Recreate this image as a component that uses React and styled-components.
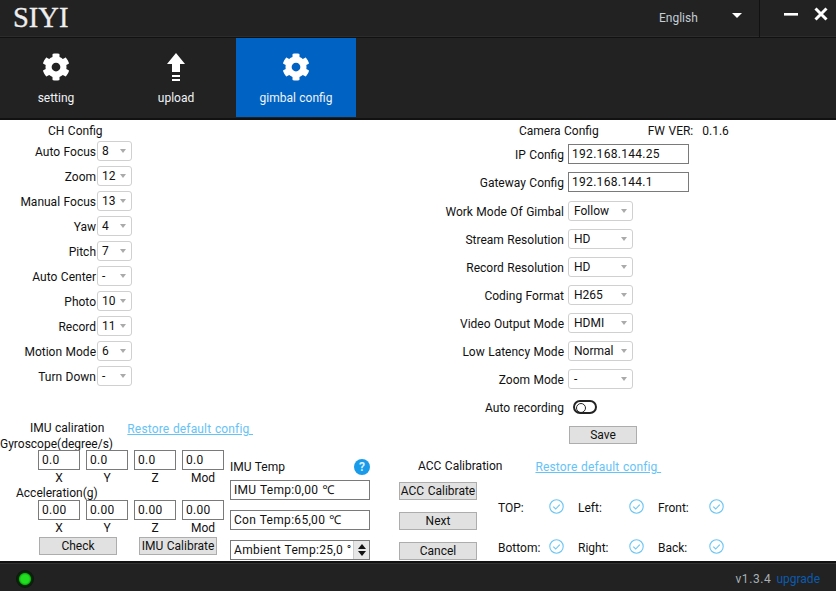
import React from "react";
import styled, { createGlobalStyle } from "styled-components";
import { FaCog } from "react-icons/fa";

const Global = createGlobalStyle`
  html, body { margin: 0; padding: 0; background: #fff; }
  body { font-family: Roboto, "Noto Sans", "Liberation Sans", sans-serif; font-size: 12px; color: #111; word-spacing: 0.5px; }
  * { box-sizing: border-box; }
`;

const Page = styled.div`
  width: 836px; height: 591px; display: flex; flex-direction: column; overflow: hidden;
`;
const TitleBar = styled.header`
  height: 38px; background: #222; border-bottom: 1px solid #111; display: flex; align-items: stretch;
  box-shadow: inset 0 -1px 0 #2c2c2c; flex: none;
`;
const Logo = styled.div`
  font-family: "Liberation Serif", serif; font-size: 28.5px; line-height: 36px; color: #eee; margin-left: 13px; width: 647px; -webkit-text-stroke: 0.3px #eee;
`;
const Lang = styled.div`
  width: 100px; display: flex; align-items: center; justify-content: space-between; margin-left: -1px; color: #c4ced6; padding-bottom: 2px;
`;
const LangArrow = styled.span`
  width: 0; height: 0; border-left: 5px solid transparent; border-right: 5px solid transparent; border-top: 5px solid #fff; margin: 0 17px 4px 0;
`;
const WinControls = styled.div`
  flex: 1; border-left: 1px solid #111; display: flex; align-items: flex-start; padding: 7px 0 0 24px; gap: 16px;
`;
const Nav = styled.nav`
  height: 82px; background: #222; border-bottom: 2px solid #111; display: flex; flex: none; padding-bottom: 1px;
`;
const Tab = styled.div`
  width: 120px; display: flex; flex-direction: column; align-items: center; padding-top: 15px; color: #fff; background: ${p => p.$active ? "#0062c2" : "transparent"};
  &:first-child { margin-left: -4px; }
  & > svg { display: block; height: 28px; width: 28px; }
`;
const TabLabel = styled.span`
  margin-top: 9px; line-height: 16px; color: #f0f4f8;
`;

const Content = styled.main`
  flex: 1; background: #fff; display: flex; flex-direction: column; min-height: 0;
`;
const Upper = styled.section`
  display: flex; height: 316px; flex: none;
`;
const LeftCol = styled.div`
  width: 260px; flex: none; display: flex; flex-direction: column;
`;
const Heading = styled.div`
  line-height: 16px; padding-left: ${p => p.$left || 0}px; margin-top: ${p => p.$top || 0}px; white-space: nowrap;
`;
const ChList = styled.div`
  display: grid; grid-template-columns: 97px 35px; row-gap: 5px; margin-top: 2px; align-items: center;
`;
const FieldLabel = styled.div`
  text-align: right; padding-right: 1px; white-space: nowrap; line-height: 22px; height: 20px;
`;
const Select = styled.div`
  position: relative; height: 20px; width: ${p => p.$w || 35}px; border: 1px solid #d0d0d0; border-radius: 3px; background: #fff;
  padding-left: ${p => p.$pad || 4}px; line-height: 19px;
  &::after { content: ""; position: absolute; right: 5px; top: 7px; border-left: 3.5px solid transparent; border-right: 3.5px solid transparent; border-top: 4px solid #aaa; }
`;
const ImuHead = styled.div`
  margin-top: 35px; display: flex; padding-left: 30px; white-space: nowrap;
`;
const Link = styled.span`
  color: #66c3f7; text-decoration: underline; white-space: pre; line-height: 16px; letter-spacing: 0.15px; margin-left: ${p => p.$ml}px;
`;

const CameraCol = styled.div`
  flex: 1; display: flex; flex-direction: column;
`;
const CamHead = styled.div`
  display: flex; line-height: 16px; padding-left: 259px; margin-top: 3px; white-space: nowrap;
`;
const FwVer = styled.span`
  margin-left: 49px;
`;
const FwNum = styled.span`
  margin-left: 9px;
`;
const CamGrid = styled.div`
  display: grid; grid-template-columns: 308px 1fr; margin-top: 5px; row-gap: 8px; align-items: center;
`;
const CamLabel = styled.div`
  text-align: right; padding-right: 4px; white-space: nowrap; line-height: 22px; height: 20px;
`;
const CamSelects = styled.div`
  display: grid; grid-template-columns: 308px 1fr; grid-auto-rows: 28px; margin-top: 5px; align-items: center;
`;
const TextBox = styled.div`
  height: 20px; width: ${p => p.$w}px; border: 1px solid #7a7a7a; background: #fff; padding-left: 3px; line-height: 19px; letter-spacing: 0.3px; white-space: nowrap; overflow: hidden; position: relative;
`;
const Toggle = styled.div`
  width: 24px; height: 14px; border: 2px solid #222; border-radius: 7px; margin: -1px 0 0 5px; position: relative;
  &::after { content: ""; position: absolute; left: 1px; top: 1px; width: 8px; height: 8px; border: 1px solid #222; border-radius: 50%; }
`;
const Button = styled.div`
  width: ${p => p.$w || 78}px; height: 18px; background: #e1e1e1; border: 1px solid #adadad; text-align: center; line-height: 17px; white-space: nowrap; flex: none;
`;
const SaveButton = styled(Button)`
  margin: 5px 0 0 309px;
`;

const Lower = styled.section`
  display: flex; flex: 1; min-height: 0;
`;
const ImuCol = styled.div`
  width: 230px; flex: none;
`;
const GaugeRow = styled.div`
  display: grid; grid-template-columns: repeat(4, 42px); column-gap: 6px; padding-left: 38px; margin-top: ${p => p.$top || 0}px;
`;
const GaugeLabel = styled.div`
  text-align: center; line-height: 17px; height: 14px;
`;
const ImuButtons = styled.div`
  display: flex; gap: 22px; padding-left: 39px; margin-top: 3px;
`;
const TempCol = styled.div`
  width: 140px; flex: none; padding-top: 23px; display: flex; flex-direction: column;
`;
const TempHead = styled.div`
  display: flex; align-items: center; justify-content: space-between; height: 16px; margin-bottom: 6px;
`;
const Help = styled.span`
  width: 16px; height: 16px; border-radius: 50%; background: #1a9bea; color: #d8f0ff; text-align: center; line-height: 16px; font-weight: 700;
`;
const TempStack = styled.div`
  display: flex; flex-direction: column; gap: 10px; margin-top: -1px;
`;
const Spin = styled.div`
  position: absolute; right: 0; top: 0; bottom: 0; width: 16px; background: #e6e6e6; display: flex; flex-direction: column; justify-content: center; gap: 2px; align-items: center; border-left: 1px solid #ccc;
`;
const SpinArrow = styled.span`
  width: 0; height: 0; border-left: 4px solid transparent; border-right: 4px solid transparent;
  ${p => p.$down ? "border-top: 5px solid #111;" : "border-bottom: 5px solid #111;"}
`;
const AccCol = styled.div`
  flex: 1; padding-top: 23px; padding-left: 29px; display: flex; flex-direction: column;
`;
const AccHead = styled.div`
  display: flex; padding-left: 19px; height: 16px;
`;
const AccBody = styled.div`
  display: flex; margin-top: 7px;
`;
const AccButtons = styled.div`
  width: 100px; display: flex; flex-direction: column; gap: 12px;
`;
const ChecksGrid = styled.div`
  display: grid; grid-template-columns: 80px 80px 80px; grid-auto-rows: 40px; margin: 15px 0 0 -1px;
`;
const CheckCell = styled.div`
  display: flex; align-items: center; height: 20px;
  & > span { width: 51px; white-space: nowrap; line-height: 16px; padding-top: 2px; }
`;
const CheckIcon = styled.svg`
  width: 15px; height: 15px; flex: none; margin-top: -2px;
`;

const Footer = styled.footer`
  height: 30px; background: #222; border-top: 2px solid #111; box-shadow: inset 0 1px 0 #333; display: flex; align-items: center; flex: none; padding: 4px 16px 0 16px;
`;
const Led = styled.span`
  width: 18px; height: 18px; border-radius: 50%; background: radial-gradient(circle closest-side, #22dd22 0 45%, #0ab40a 62%, #0a2a0a 72%, #0c140c 100%);
`;
const Version = styled.span`
  margin-left: auto; color: #a8b0b6; letter-spacing: 0.6px;
`;
const Upgrade = styled.span`
  color: #0a5bb0; margin-left: 5px;
`;

const Ok = () => (
  <CheckIcon viewBox="0 0 15 15" fill="none" stroke="#6cc6f5" strokeWidth="1.1">
    <circle cx="7.5" cy="7.5" r="6.7" />
    <path d="M4.3 7.6 L6.7 10 L10.8 5.6" />
  </CheckIcon>
);

const UploadIcon = () => (
  <svg viewBox="0 0 28 28" fill="#fff">
    <path d="M14 0 L23 11 H18 V19 H10 V11 H5 Z" />
    <rect x="10" y="22" width="8" height="2" />
    <rect x="10" y="26" width="8" height="2" />
  </svg>
);

const ch = [["Auto Focus","8"],["Zoom","12"],["Manual Focus","13"],["Yaw","4"],["Pitch","7"],["Auto Center","-"],["Photo","10"],["Record","11"],["Motion Mode","6"],["Turn Down","-"]];
const cam = [["Work Mode Of Gimbal","Follow"],["Stream Resolution","HD"],["Record Resolution","HD"],["Coding Format","H265"],["Video Output Mode","HDMI"],["Low Latency Mode","Normal"],["Zoom Mode","-"]];
const checks = ["TOP:","Left:","Front:","Bottom:","Right:","Back:"];

export default function App() {
  return (
    <Page>
      <Global />
      <TitleBar>
        <Logo>SIYI</Logo>
        <Lang>English<LangArrow /></Lang>
        <WinControls>
          <svg width="14" height="14" viewBox="0 0 14 14"><rect x="0" y="6" width="14" height="2.6" fill="#fff" /></svg>
          <svg width="14" height="14" viewBox="0 0 14 14"><path d="M1.5 1.5 L12.5 12.5 M12.5 1.5 L1.5 12.5" stroke="#fff" strokeWidth="3" /></svg>
        </WinControls>
      </TitleBar>
      <Nav>
        <Tab><FaCog /><TabLabel>setting</TabLabel></Tab>
        <Tab><UploadIcon /><TabLabel>upload</TabLabel></Tab>
        <Tab $active><FaCog /><TabLabel>gimbal config</TabLabel></Tab>
      </Nav>
      <Content>
        <Upper>
          <LeftCol>
            <Heading $left={48} $top={3}>CH Config</Heading>
            <ChList>
              {ch.map(([l, v]) => (
                <React.Fragment key={l}>
                  <FieldLabel>{l}</FieldLabel>
                  <Select>{v}</Select>
                </React.Fragment>
              ))}
            </ChList>
            <ImuHead>
              <span>IMU caliration</span>
              <Link $ml={23}>Restore default config </Link>
            </ImuHead>
          </LeftCol>
          <CameraCol>
            <CamHead>Camera Config<FwVer>FW VER:</FwVer><FwNum>0.1.6</FwNum></CamHead>
            <CamGrid>
              <CamLabel>IP Config</CamLabel>
              <TextBox $w={121}>192.168.144.25</TextBox>
              <CamLabel>Gateway Config</CamLabel>
              <TextBox $w={121}>192.168.144.1</TextBox>
            </CamGrid>
            <CamSelects>
              {cam.map(([l, v]) => (
                <React.Fragment key={l}>
                  <CamLabel>{l}</CamLabel>
                  <Select $w={65} $pad={5}>{v}</Select>
                </React.Fragment>
              ))}
              <CamLabel>Auto recording</CamLabel>
              <Toggle />
            </CamSelects>
            <SaveButton $w={68}>Save</SaveButton>
          </CameraCol>
        </Upper>
        <Lower>
          <ImuCol>
            <Heading>Gyroscope(degree/s)</Heading>
            <GaugeRow $top={-2}>
              {["0.0","0.0","0.0","0.0"].map((v, i) => <TextBox key={i}>{v}</TextBox>)}
              {["X","Y","Z","Mod"].map(v => <GaugeLabel key={v}>{v}</GaugeLabel>)}
            </GaugeRow>
            <Heading $left={16} $top={1}>Acceleration(g)</Heading>
            <GaugeRow $top={-1}>
              {["0.00","0.00","0.00","0.00"].map((v, i) => <TextBox key={i}>{v}</TextBox>)}
              {["X","Y","Z","Mod"].map(v => <GaugeLabel key={v}>{v}</GaugeLabel>)}
            </GaugeRow>
            <ImuButtons>
              <Button>Check</Button>
              <Button>IMU Calibrate</Button>
            </ImuButtons>
          </ImuCol>
          <TempCol>
            <TempHead><span>IMU Temp</span><Help>?</Help></TempHead>
            <TempStack>
              <TextBox>IMU Temp:0,00 ℃</TextBox>
              <TextBox>Con Temp:65,00 ℃</TextBox>
              <TextBox>Ambient Temp:25,0 °<Spin><SpinArrow /><SpinArrow $down /></Spin></TextBox>
            </TempStack>
          </TempCol>
          <AccCol>
            <AccHead><span>ACC Calibration</span><Link $ml={33}>Restore default config </Link></AccHead>
            <AccBody>
              <AccButtons>
                <Button>ACC Calibrate</Button>
                <Button>Next</Button>
                <Button>Cancel</Button>
              </AccButtons>
              <ChecksGrid>
                {checks.map(c => <CheckCell key={c}><span>{c}</span><Ok /></CheckCell>)}
              </ChecksGrid>
            </AccBody>
          </AccCol>
        </Lower>
      </Content>
      <Footer>
        <Led />
        <Version>v1.3.4</Version>
        <Upgrade>upgrade</Upgrade>
      </Footer>
    </Page>
  );
}
